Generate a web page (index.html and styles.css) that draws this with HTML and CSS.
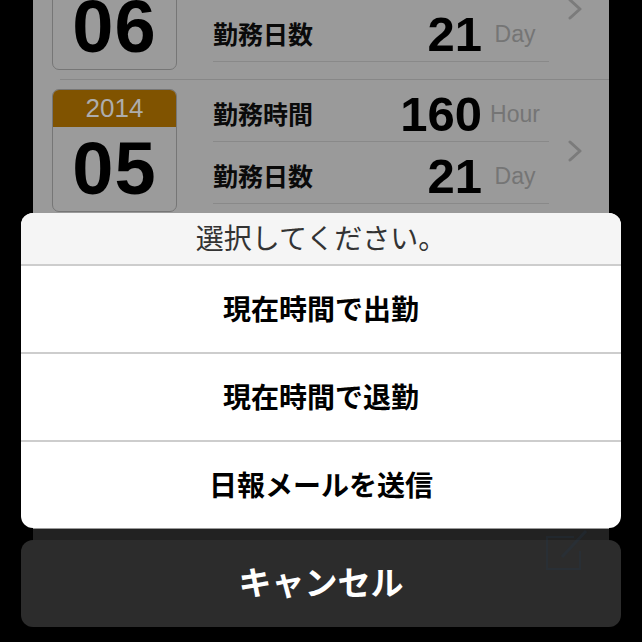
FILE: index.html
```html
<!DOCTYPE html>
<html lang="ja">
<head>
<meta charset="utf-8">
<title>勤務記録</title>
<link rel="stylesheet" href="styles.css">
</head>
<body>
<div class="screen">
  <div class="panel">
    <div class="list">
      <div class="row">
        <div class="cal">
          <div class="cal-year">2014</div>
          <div class="cal-month">06</div>
        </div>
        <div class="stats">
          <div class="stat"><span class="label">勤務時間</span><span class="value">160</span><span class="unit">Hour</span></div>
          <div class="stat"><span class="label">勤務日数</span><span class="value">21</span><span class="unit">Day</span></div>
        </div>
        <svg class="chev" viewBox="0 0 14 22" width="14" height="22"><polyline points="2,2 12,11 2,20" fill="none" stroke="#7b7b7b" stroke-width="3" stroke-linecap="round" stroke-linejoin="round"/></svg>
      </div>
      <div class="sep"></div>
      <div class="row">
        <div class="cal">
          <div class="cal-year">2014</div>
          <div class="cal-month">05</div>
        </div>
        <div class="stats">
          <div class="stat"><span class="label">勤務時間</span><span class="value">160</span><span class="unit">Hour</span></div>
          <div class="stat"><span class="label">勤務日数</span><span class="value">21</span><span class="unit">Day</span></div>
        </div>
        <svg class="chev" viewBox="0 0 14 22" width="14" height="22"><polyline points="2,2 12,11 2,20" fill="none" stroke="#7b7b7b" stroke-width="3" stroke-linecap="round" stroke-linejoin="round"/></svg>
      </div>
      <div class="sep"></div>
      <div class="row">
        <div class="cal">
          <div class="cal-year">2014</div>
          <div class="cal-month">04</div>
        </div>
        <div class="stats">
          <div class="stat"><span class="label">勤務時間</span><span class="value">160</span><span class="unit">Hour</span></div>
          <div class="stat"><span class="label">勤務日数</span><span class="value">21</span><span class="unit">Day</span></div>
        </div>
        <svg class="chev" viewBox="0 0 14 22" width="14" height="22"><polyline points="2,2 12,11 2,20" fill="none" stroke="#7b7b7b" stroke-width="3" stroke-linecap="round" stroke-linejoin="round"/></svg>
      </div>
    </div>
    <div class="toolbar"></div>
  </div>

  <div class="sheet-wrap">
    <div class="sheet">
      <div class="sheet-title">選択してください。</div>
      <div class="sheet-btn">現在時間で出勤</div>
      <div class="sheet-btn">現在時間で退勤</div>
      <div class="sheet-btn">日報メールを送信</div>
    </div>
    <div class="cancel">キャンセル</div>
    <svg class="compose" viewBox="0 0 42 42" width="42" height="42">
      <path d="M28 8 H1 V40 H34 V22" fill="none" stroke="#1f3a57" stroke-width="2"/>
      <path d="M16 28 L40 2" fill="none" stroke="#1f3a57" stroke-width="3"/>
    </svg>
  </div>
</div>
</body>
</html>
```

FILE: styles.css
```css
html, body {
  margin: 0;
  padding: 0;
  background: #000;
}
body {
  width: 642px;
  height: 642px;
  overflow: hidden;
  font-family: "Liberation Sans", "Noto Sans CJK JP", sans-serif;
}
.screen {
  position: relative;
  width: 642px;
  height: 642px;
  overflow: hidden;
}
.panel {
  margin: 0 33px;
  width: 576px;
}
.list {
  margin-top: -62px;
  height: 591px;
  overflow: hidden;
  background: #9a9a9a;
}
.row {
  display: flex;
  height: 141px;
  padding-left: 19px;
}
.sep {
  height: 1px;
  margin-left: 27px;
  background: #878787;
}
.cal {
  box-sizing: border-box;
  width: 125px;
  height: 123px;
  margin-top: 9px;
  border: 1px solid #767676;
  border-radius: 7px;
  overflow: hidden;
  display: flex;
  flex-direction: column;
  background: #9b9b9b;
}
.cal-year {
  height: 37px;
  background: #805300;
  color: #adadad;
  font-size: 26px;
  line-height: 37px;
  text-align: center;
}
.cal-month {
  flex: 1;
  display: flex;
  align-items: center;
  justify-content: center;
  font-size: 74px;
  font-weight: 700;
  line-height: 1;
  color: #000;
  letter-spacing: 1px;
}
.stats {
  width: 336px;
  margin-left: 36px;
}
.stat {
  box-sizing: border-box;
  height: 62px;
  padding-top: 8px;
  padding-right: 4px;
  border-bottom: 1px solid #898989;
  display: grid;
  grid-template-columns: 1fr auto 60px;
  align-items: center;
}
.label {
  font-family: "Noto Sans CJK JP", sans-serif;
  font-size: 25px;
  font-weight: 700;
  color: #0a0a0a;
  margin-bottom: 4px;
}
.value {
  font-size: 49px;
  font-weight: 700;
  line-height: 1;
  color: #000;
  margin-right: 3px;
}
.unit {
  font-size: 23px;
  color: #757575;
  text-align: center;
  line-height: 1;
}
.chev {
  align-self: center;
  margin-left: 19px;
}
.toolbar {
  height: 98px;
  background: #222;
}
.sheet-wrap {
  position: absolute;
  top: 213px;
  left: 21px;
  width: 600px;
  display: flex;
  flex-direction: column;
  gap: 12px;
}
.sheet {
  border-radius: 12px;
  overflow: hidden;
  background: #fff;
  font-family: "Noto Sans CJK JP", sans-serif;
}
.sheet-title {
  box-sizing: border-box;
  height: 51px;
  padding-bottom: 3px;
  background: #f5f5f5;
  color: #333;
  font-size: 28px;
  display: flex;
  align-items: center;
  justify-content: center;
}
.sheet-btn {
  box-sizing: border-box;
  height: 88px;
  padding-bottom: 3px;
  border-top: 2px solid #cdcdcd;
  display: flex;
  align-items: center;
  justify-content: center;
  font-size: 28px;
  font-weight: 700;
  color: #000;
}
.cancel {
  box-sizing: border-box;
  height: 87px;
  padding-bottom: 5px;
  border-radius: 12px;
  background: #2c2c2c;
  color: #fff;
  font-family: "Noto Sans CJK JP", sans-serif;
  font-size: 33px;
  font-weight: 700;
  display: flex;
  align-items: center;
  justify-content: center;
}
.compose {
  position: absolute;
  left: 525px;
  top: 316px;
  opacity: 0.22;
}
```
